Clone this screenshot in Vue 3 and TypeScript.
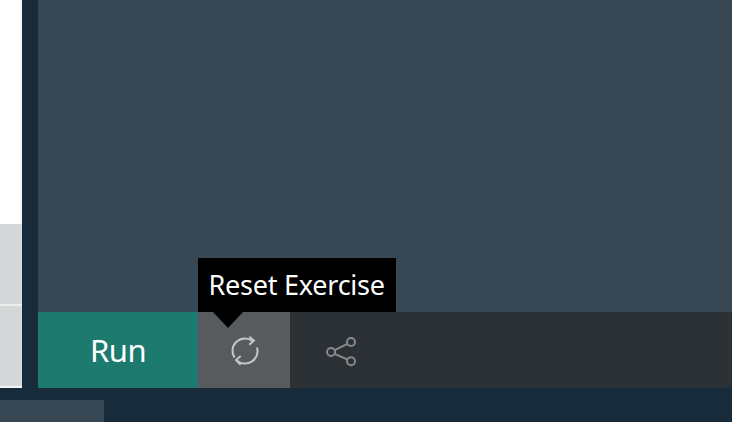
<template>
  <div class="page">
    <div class="main">
      <aside class="side">
        <div class="side-top" />
        <div class="side-row first" />
        <div class="side-row" />
      </aside>
      <section class="work">
        <div class="output" />
        <div class="bar">
          <button type="button" class="run">Run</button>
          <button type="button" class="tool reset" aria-label="Reset Exercise">
            <span class="tip">Reset Exercise</span>
            <svg width="36" height="36" viewBox="-1 0 36 36" fill="none" stroke="#c3c5c6" stroke-width="2">
              <path d="M25.5 9A12.5 12.5 0 0 0 7.5 25.8" />
              <path d="M22.3 4.7 27 8.6 22.3 12.7" />
              <path d="M9.7 28.4A12.5 12.5 0 0 0 30 15.5" />
              <path d="M13.7 24 9 28 13.7 32.7" />
            </svg>
          </button>
          <button type="button" class="tool share" aria-label="Share">
            <svg width="36" height="36" viewBox="-1 0 36 36" fill="none" stroke="#858a8e" stroke-width="2">
              <circle cx="8" cy="20" r="4" />
              <circle cx="28" cy="10" r="4" />
              <circle cx="28" cy="29.3" r="4" />
              <path d="M11.6 18.2 24.4 11.8M11.6 21.8 24.4 27.5" />
            </svg>
          </button>
        </div>
      </section>
    </div>
    <div class="foot">
      <div class="foot-tab" />
    </div>
  </div>
</template>

<script setup lang="ts">
</script>

<style>
html, body { margin: 0; background: #172b3a; }
</style>

<style scoped>
.page { width: 732px; height: 422px; display: flex; flex-direction: column; background: #172b3a; overflow: hidden; font-family: "Noto Sans", "Open Sans", sans-serif; }
.main { height: 388px; display: flex; }
.side { width: 22px; display: flex; flex-direction: column; background: #f4f4f4; }
.side-top { height: 224px; background: #fff; border-right: 2px solid #f6f6f6; box-sizing: border-box; }
.side-row { height: 80px; background: #d6d7d8; }
.side-row.first { border-bottom: 2px solid #eceded; }
.work { margin-left: 16px; flex: 1; display: flex; flex-direction: column; }
.output { flex: 1; background: #384754; }
.bar { height: 76px; display: flex; background: #2c3135; }
.run { width: 160px; border: 0; background: #1d7a6f; color: #fff; font: 31px/1 "Noto Sans", "Open Sans", sans-serif; letter-spacing: -0.5px; padding: 0; }
.tool { position: relative; border: 0; padding: 0; background: none; display: flex; align-items: center; justify-content: center; }
.reset { width: 92px; background: #575b5e; }
.share { width: 100px; }
.tip { position: absolute; left: 0; bottom: 100%; padding: 0 11px 0 10.5px; height: 54px; line-height: 54px; background: #000; color: #fff; font-family: "Noto Sans", "Open Sans", sans-serif; font-size: 27px; letter-spacing: -0.24px; white-space: nowrap; }
.tip::after { content: ""; position: absolute; left: 15px; top: 100%; border: 15px solid transparent; border-top: 16px solid #000; border-bottom: 0; }
.foot { height: 34px; padding-top: 12px; box-sizing: border-box; }
.foot-tab { width: 104px; height: 22px; background: #384754; }
</style>
